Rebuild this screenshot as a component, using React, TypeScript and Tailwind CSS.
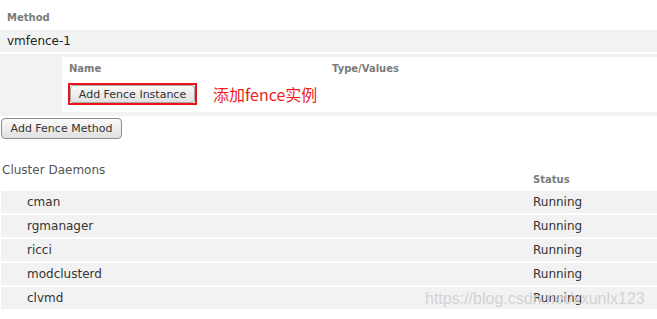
const daemons = ['cman', 'rgmanager', 'ricci', 'modclusterd', 'clvmd'];

const App = () => {
  return (
    <div className="relative w-[657px] h-[319px] overflow-hidden bg-white font-['DejaVu_Sans',sans-serif] text-[12px] text-[#222]">
      {/* Method */}
      <div className="pl-[7px] pt-[11px] text-[10px] font-bold leading-[13px] text-[#7b7b7b]">Method</div>
      <div className="mt-[6px] flex h-[22px] items-center bg-[#f2f2f2] pl-[7px]">vmfence-1</div>

      {/* Fence instances panel */}
      <div className="mt-[2px] bg-[#f2f2f2] pb-[4px] pl-[62px] pt-[3px]">
        <div className="h-[55px] bg-white pl-[6px] pt-[5px]">
          <div className="flex text-[10px] font-bold leading-[13px] text-[#7b7b7b]">
            <div className="w-[264px] pl-[1px]">Name</div>
            <div>Type/Values</div>
          </div>
          <div className="mt-[8px] flex items-center">
            <div className="h-[22px] w-[129px] border-2 border-[#e8141a]">
              <button className="flex h-full w-full items-center justify-center rounded-[3px] border border-[#a8a8a8] bg-gradient-to-b from-[#fafafa] to-[#e1e1e1] text-[11px] leading-none text-[#333]">
                Add Fence Instance
              </button>
            </div>
            <span className="ml-[16px] font-['Noto_Sans_CJK_SC',sans-serif] text-[16px] leading-[20px] text-[#f21d1d]">
              添加fence实例
            </span>
          </div>
        </div>
      </div>

      <button className="ml-[1px] mt-[2px] flex h-[21px] w-[121px] items-center justify-center rounded-[4px] border border-[#8c8c8c] bg-gradient-to-b from-[#fbfbfb] to-[#e0e0e0] text-[11px] leading-none text-[#333]">
        Add Fence Method
      </button>

      {/* Cluster daemons */}
      <div className="mt-[24px] flex">
        <div className="w-[533px] pl-[2px] leading-[15px] text-[#555]">Cluster Daemons</div>
        <div className="pt-[10px] text-[10px] font-bold leading-[13px] text-[#7b7b7b]">Status</div>
      </div>
      <div className="mt-[5px] flex flex-col gap-[2px] pl-[1px]">
        {daemons.map((d) => (
          <div key={d} className="flex h-[22px] items-center bg-[#f2f2f2] text-[#333]">
            <div className="w-[532px] pl-[26px]">{d}</div>
            <div>Running</div>
          </div>
        ))}
      </div>

      <div className="pointer-events-none absolute left-[425px] top-[289px] font-['Liberation_Sans',sans-serif] text-[16px] leading-[20px] text-[#d2d2d2]">
        https://blog.csdn.net/xxunlx123
      </div>
    </div>
  );
};

export default App;
